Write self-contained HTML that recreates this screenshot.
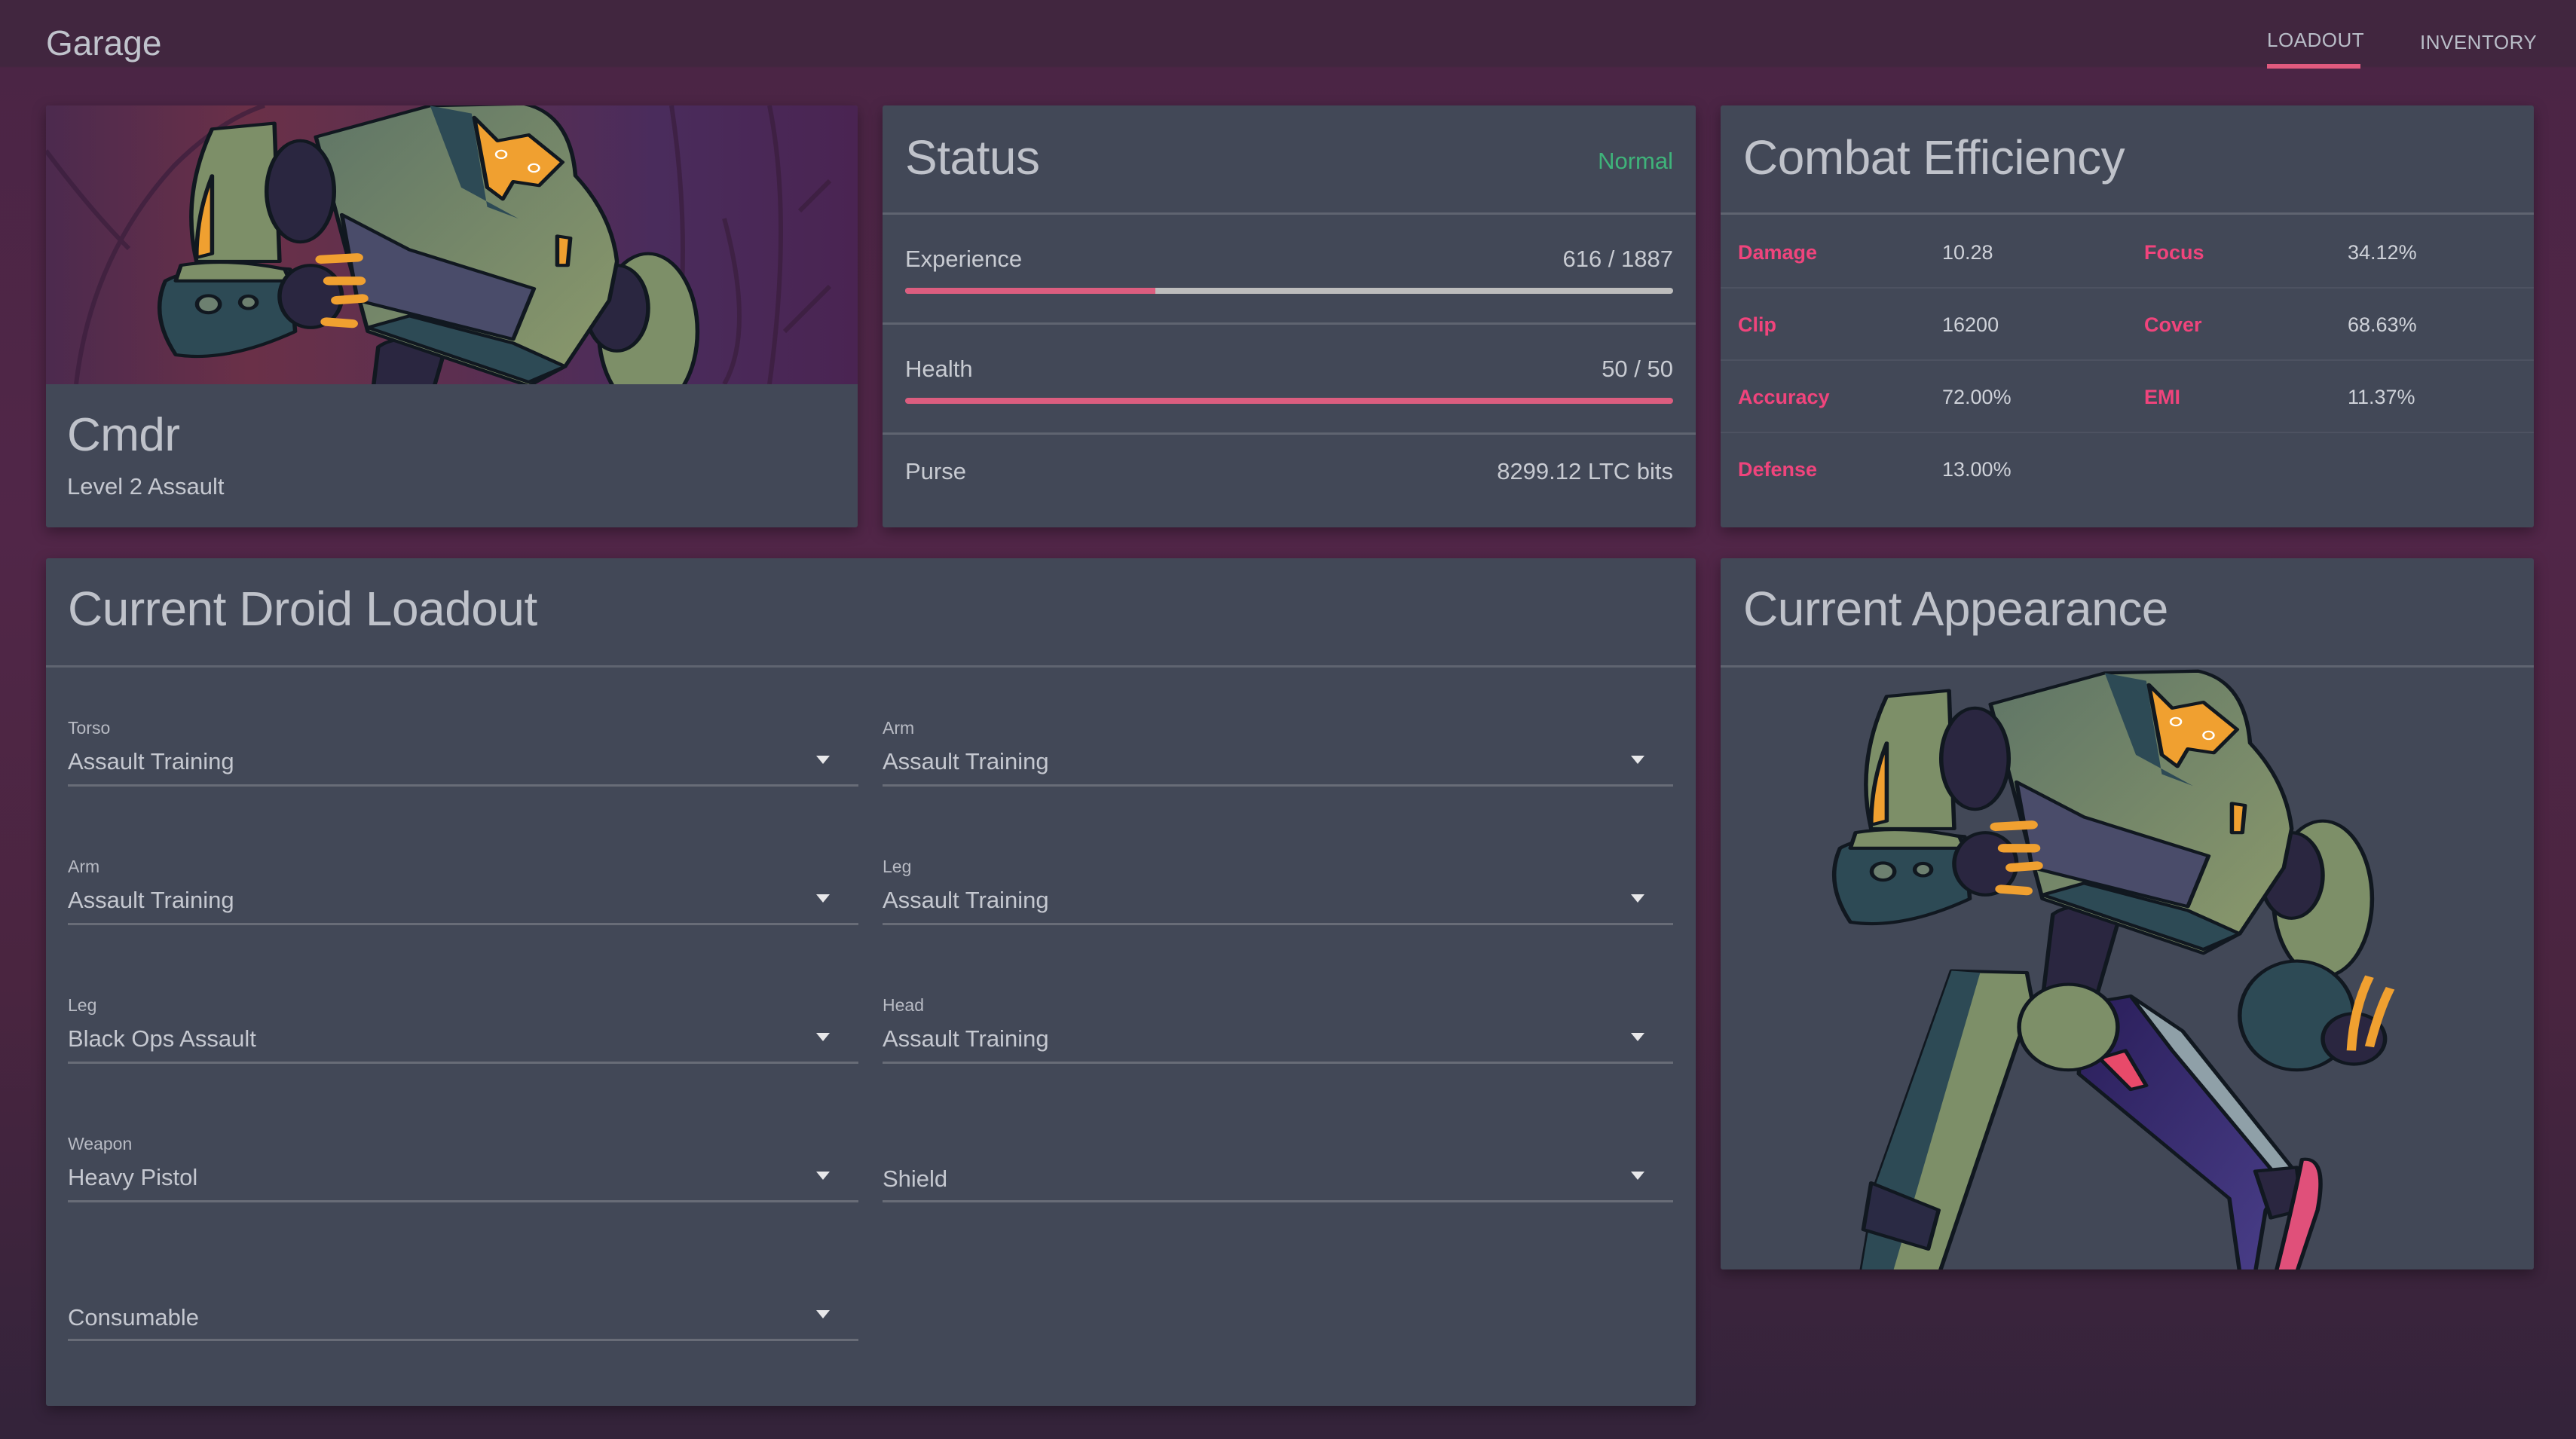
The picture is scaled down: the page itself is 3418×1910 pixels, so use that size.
<!DOCTYPE html>
<html><head><meta charset="utf-8">
<style>
*{box-sizing:border-box;margin:0;padding:0}
html,body{width:3418px;height:1910px;overflow:hidden}
body{font-family:"Liberation Sans",sans-serif;color:#c3c6ce;
background:linear-gradient(180deg,#41263f 0,#41263f 88px,#4b2545 90px,#512648 700px,#4a2540 1300px,#33233a 1910px);position:relative}
.hdr{position:absolute;left:61px;top:30px;font-size:46px;color:#c0c3cc}
.tab{position:absolute;top:38px;font-size:26px;color:#b9bdc8;letter-spacing:.5px}
.ul{position:absolute;left:3008px;top:85px;width:124px;height:6px;background:#e05a7e}
.card{position:absolute;background:#424857;border-radius:3px;box-shadow:0 6px 18px rgba(0,0,0,.35);overflow:hidden}
.title{position:absolute;font-size:64px;color:#bfc2ca;font-weight:300;letter-spacing:-.5px}
.div{position:absolute;left:0;right:0;height:3px;background:#5f6470}
.row{position:absolute;left:30px;right:30px;font-size:31px;color:#c8cbd2}
.row .r{position:absolute;right:0;top:0}
.bar{position:absolute;left:30px;right:30px;height:8px;border-radius:4px;background:#bdbdbd;overflow:hidden}
.bar i{display:block;height:100%;background:#dc5d7f}
.ce{position:absolute;font-size:27px}
.ce.l{color:#f0447c;font-weight:bold}
.ce.v{color:#cfd2d9}
.cdiv{position:absolute;left:0;right:0;height:2px;background:#4d5261}
.f{position:absolute;width:1049px}
.f .lb{position:absolute;top:0;font-size:23px;color:#b8bbc4}
.f .vl{position:absolute;top:40px;font-size:31px;color:#c5c8d0}
.f .ar{position:absolute;right:38px;top:50px;width:0;height:0;border-left:9px solid transparent;border-right:9px solid transparent;border-top:11px solid #e8e8ea}
.f .ln{position:absolute;left:0;right:0;top:88px;height:3px;background:#686c77}
</style></head><body>
<div class="hdr">Garage</div>
<div class="tab" style="left:3008px;top:38px">LOADOUT</div>
<div class="tab" style="left:3211px;top:41px">INVENTORY</div>
<div class="ul"></div>

<div class="card" style="left:61px;top:140px;width:1077px;height:560px">
 <div style="position:absolute;left:0;top:0;width:1077px;height:370px;overflow:hidden;background:linear-gradient(90deg,#4c2a4e 0,#6a3048 25%,#5c2f50 50%,#4a2c5c 75%,#4a2452 100%)">
  <svg style="position:absolute;left:0;top:0" width="1077" height="370" viewBox="0 0 1077 370">
   <g fill="none" stroke="#3a1e3c" stroke-width="6" opacity=".7">
    <path d="M0 60 Q60 140 110 190"/><path d="M40 370 Q60 200 170 80 Q230 20 290 0"/>
    <path d="M830 0 Q860 200 830 370"/><path d="M900 150 Q940 300 900 370"/>
    <path d="M960 0 Q990 150 960 370"/><path d="M1000 140 L1040 100"/><path d="M980 300 L1040 240"/>
   </g>
  </svg>
  <svg style="position:absolute;left:0;top:-10px" width="1080" height="810" viewBox="0 0 1568 1568" preserveAspectRatio="none">
   <use href="#rb"/>
  </svg>
 </div>
 <div class="title" style="left:28px;top:402px;font-size:62px">Cmdr</div>
 <div style="position:absolute;left:28px;top:488px;font-size:31px;color:#c5c8d0">Level 2 Assault</div>
</div>

<div class="card" style="left:1171px;top:140px;width:1079px;height:560px">
 <div class="title" style="left:30px;top:32px">Status</div>
 <div style="position:absolute;right:30px;top:56px;font-size:31px;color:#3fb37a">Normal</div>
 <div class="div" style="top:142px"></div>
 <div class="row" style="top:186px">Experience<span class="r">616 / 1887</span></div>
 <div class="bar" style="top:242px"><i style="width:32.6%"></i></div>
 <div class="div" style="top:288px"></div>
 <div class="row" style="top:332px">Health<span class="r">50 / 50</span></div>
 <div class="bar" style="top:388px"><i style="width:100%"></i></div>
 <div class="div" style="top:434px"></div>
 <div class="row" style="top:468px">Purse<span class="r">8299.12 LTC bits</span></div>
</div>

<div class="card" style="left:2283px;top:140px;width:1079px;height:560px">
 <div class="title" style="left:30px;top:32px">Combat Efficiency</div>
 <div class="div" style="top:142px"></div>
 <div class="ce l" style="left:23px;top:180px">Damage</div><div class="ce v" style="left:294px;top:180px">10.28</div>
 <div class="ce l" style="left:562px;top:180px">Focus</div><div class="ce v" style="left:832px;top:180px">34.12%</div>
 <div class="cdiv" style="top:241px"></div>
 <div class="ce l" style="left:23px;top:276px">Clip</div><div class="ce v" style="left:294px;top:276px">16200</div>
 <div class="ce l" style="left:562px;top:276px">Cover</div><div class="ce v" style="left:832px;top:276px">68.63%</div>
 <div class="cdiv" style="top:337px"></div>
 <div class="ce l" style="left:23px;top:372px">Accuracy</div><div class="ce v" style="left:294px;top:372px">72.00%</div>
 <div class="ce l" style="left:562px;top:372px">EMI</div><div class="ce v" style="left:832px;top:372px">11.37%</div>
 <div class="cdiv" style="top:433px"></div>
 <div class="ce l" style="left:23px;top:468px">Defense</div><div class="ce v" style="left:294px;top:468px">13.00%</div>
</div>

<div class="card" style="left:61px;top:741px;width:2189px;height:1125px">
 <div class="title" style="left:29px;top:30px">Current Droid Loadout</div>
 <div class="div" style="top:142px"></div>
 <div class="f" style="left:29px;top:212px"><div class="lb">Torso</div><div class="vl">Assault Training</div><div class="ar"></div><div class="ln"></div></div>
 <div class="f" style="left:1110px;top:212px"><div class="lb">Arm</div><div class="vl">Assault Training</div><div class="ar"></div><div class="ln"></div></div>
 <div class="f" style="left:29px;top:396px"><div class="lb">Arm</div><div class="vl">Assault Training</div><div class="ar"></div><div class="ln"></div></div>
 <div class="f" style="left:1110px;top:396px"><div class="lb">Leg</div><div class="vl">Assault Training</div><div class="ar"></div><div class="ln"></div></div>
 <div class="f" style="left:29px;top:580px"><div class="lb">Leg</div><div class="vl">Black Ops Assault</div><div class="ar"></div><div class="ln"></div></div>
 <div class="f" style="left:1110px;top:580px"><div class="lb">Head</div><div class="vl">Assault Training</div><div class="ar"></div><div class="ln"></div></div>
 <div class="f" style="left:29px;top:764px"><div class="lb">Weapon</div><div class="vl">Heavy Pistol</div><div class="ar"></div><div class="ln"></div></div>
 <div class="f" style="left:1110px;top:764px"><div class="vl" style="top:42px">Shield</div><div class="ar"></div><div class="ln"></div></div>
 <div class="f" style="left:29px;top:948px"><div class="vl" style="top:42px">Consumable</div><div class="ar"></div><div class="ln"></div></div>
</div>

<div class="card" style="left:2283px;top:741px;width:1079px;height:944px">
 <div class="title" style="left:30px;top:30px">Current Appearance</div>
 <div class="div" style="top:142px"></div>
 <svg style="position:absolute;left:0;top:142px" width="1080" height="810" viewBox="0 0 1568 1568" preserveAspectRatio="none">
  <defs>
   <linearGradient id="gt" x1="0" y1="0" x2="1" y2="1"><stop offset="0" stop-color="#5f7566"/><stop offset="1" stop-color="#8c9a6c"/></linearGradient>
   <linearGradient id="pu" x1="0" y1="0" x2="1" y2="1"><stop offset="0" stop-color="#2a1e5a"/><stop offset="1" stop-color="#4a3f8a"/></linearGradient>
  </defs>
  <g id="rb" stroke="#111820" stroke-width="8" stroke-linejoin="round">
   <path d="M445 785 L590 790 L600 860 L420 1568 L270 1568 L300 1330 Z" fill="#7d8f68"/>
   <path d="M445 785 L500 790 L330 1568 L270 1568 L300 1330 Z" fill="#2d4a55" stroke="none"/>
   <path d="M290 1330 L420 1400 L400 1500 L275 1450 Z" fill="#2a2a44"/>
   <path d="M700 870 L790 850 L890 940 L1100 1290 L1050 1400 L1030 1560 L1000 1560 L980 1370 L690 1050 Z" fill="url(#pu)"/>
   <path d="M790 850 L890 940 L1100 1290 L1070 1310 L870 990 Z" fill="#8fa0a8"/>
   <path d="M1030 1300 L1110 1290 L1120 1400 L1060 1420 Z" fill="#2a2640"/>
   <path d="M1120 1270 Q1170 1260 1150 1400 L1110 1560 L1070 1560 Q1100 1400 1120 1270Z" fill="#e0507a"/>
   <path d="M730 1010 L780 990 L820 1080 L790 1090 Z" fill="#e84a6a"/>
   <path d="M640 640 Q680 600 770 640 L720 870 L620 860 Z" fill="#2a2640"/>
   <ellipse cx="670" cy="930" rx="95" ry="110" fill="#7d8f68"/>
   <ellipse cx="1160" cy="600" rx="95" ry="200" fill="#7d8f68"/>
   <ellipse cx="1100" cy="540" rx="60" ry="110" fill="#2a2640"/>
   <ellipse cx="1110" cy="900" rx="110" ry="140" fill="#2d4a55"/>
   <ellipse cx="1220" cy="960" rx="60" ry="65" fill="#2a2640"/>
   <path d="M1215 990 Q1220 880 1250 800 M1250 980 Q1270 880 1290 830" stroke="#f0a030" stroke-width="18" fill="none"/>
   <path d="M520 100 L740 20 L920 15 Q1010 40 1020 200 Q1090 300 1100 420 L1085 520 L1000 690 L930 740 L620 600 L560 300 Z" fill="url(#gt)"/>
   <path d="M570 300 L700 390 L940 490 L900 620 L720 560 L600 520 Z" fill="#4a4c6a"/>
   <path d="M620 590 L930 730 L1000 690 L900 630 L700 560 Z" fill="#2d4a55"/>
   <path d="M740 20 L820 40 L850 280 L910 310 L800 230 Z" fill="#2d4a55" stroke="none"/>
   <path d="M825 50 L870 110 L930 95 L995 165 L950 225 L900 215 L880 260 L850 230 Z" fill="#f0a030"/>
   <circle cx="877" cy="145" r="10" fill="none" stroke="#fff" stroke-width="4"/>
   <circle cx="940" cy="180" r="10" fill="none" stroke="#fff" stroke-width="4"/>
   <path d="M985 355 L1010 360 L1005 430 L985 430 Z" fill="#f0a030"/>
   <path d="M320 80 L440 65 L450 420 L290 420 Q260 250 320 80Z" fill="#7d8f68"/>
   <path d="M320 200 Q290 300 290 410 L320 400 Z" fill="#f0a030"/>
   <ellipse cx="490" cy="240" rx="65" ry="130" fill="#2a2640"/>
   <path d="M230 470 Q300 420 470 440 L480 600 Q350 680 250 660 Q200 560 230 470Z" fill="#2d4a55"/>
   <path d="M260 430 Q350 410 460 440 L470 470 Q350 470 250 470Z" fill="#7d8f68"/>
   <circle cx="313" cy="530" r="22" fill="#6d8070"/><circle cx="390" cy="525" r="16" fill="#6d8070"/>
   <ellipse cx="510" cy="510" rx="60" ry="80" fill="#2a2640"/>
   <path d="M530 415 L600 410 M545 470 L605 470 M560 520 L610 515 M540 575 L590 580" stroke="#f0a030" stroke-width="22" stroke-linecap="round"/>
  </g>
 </svg>
</div>
</body></html>
